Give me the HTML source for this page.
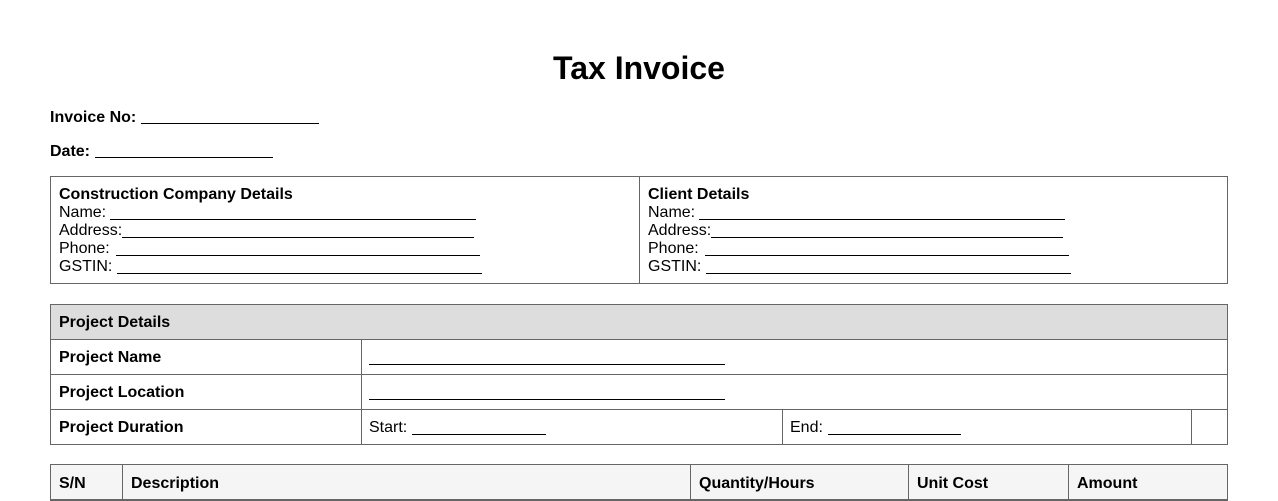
<!DOCTYPE html>
<html style="width:1278px;height:501px;overflow:hidden"><head><meta charset="utf-8"><style>
body{margin:0;width:1278px;height:501px;background:#fff;font-family:"Liberation Sans",Arial,sans-serif;font-size:16px;color:#000;position:relative;overflow:hidden}
.a{position:absolute;white-space:nowrap;line-height:18px}
.b{font-weight:bold}
.u{position:absolute;height:1px;background:#000}
.box{position:absolute;border:1px solid #666;box-sizing:border-box}
.h{position:absolute;height:1px;background:#666}
.v{position:absolute;width:1px;background:#666}
</style></head><body>
<div class="a b" style="left:0;width:1278px;text-align:center;top:49px;font-size:32px;line-height:38px">Tax Invoice</div>
<div class="a b" style="left:50px;top:109px">Invoice No:</div><div class="u" style="left:141px;width:178px;top:123px"></div>
<div class="a b" style="left:50px;top:143px">Date:</div><div class="u" style="left:95px;width:178px;top:157px"></div>

<div class="box" style="left:50px;top:176px;width:1178px;height:108px"></div>
<div class="v" style="left:639px;top:176px;height:108px"></div>
<div class="a b" style="left:59px;top:186px">Construction Company Details</div>
<div class="a" style="left:59px;top:204px">Name:</div><div class="u" style="left:110px;width:366px;top:219px"></div>
<div class="a" style="left:59px;top:222px">Address:</div><div class="u" style="left:122px;width:352px;top:237px"></div>
<div class="a" style="left:59px;top:240px">Phone:</div><div class="u" style="left:116px;width:364px;top:255px"></div>
<div class="a" style="left:59px;top:258px">GSTIN:</div><div class="u" style="left:117px;width:365px;top:273px"></div>
<div class="a b" style="left:648px;top:186px">Client Details</div>
<div class="a" style="left:648px;top:204px">Name:</div><div class="u" style="left:699px;width:366px;top:219px"></div>
<div class="a" style="left:648px;top:222px">Address:</div><div class="u" style="left:711px;width:352px;top:237px"></div>
<div class="a" style="left:648px;top:240px">Phone:</div><div class="u" style="left:705px;width:364px;top:255px"></div>
<div class="a" style="left:648px;top:258px">GSTIN:</div><div class="u" style="left:706px;width:365px;top:273px"></div>

<div class="box" style="left:50px;top:304px;width:1178px;height:141px;background:linear-gradient(#ddd 0,#ddd 35px,#fff 35px)"></div>
<div class="h" style="left:50px;width:1178px;top:339px"></div>
<div class="h" style="left:50px;width:1178px;top:374px"></div>
<div class="h" style="left:50px;width:1178px;top:409px"></div>
<div class="v" style="left:361px;top:339px;height:105px"></div>
<div class="v" style="left:782px;top:409px;height:35px"></div>
<div class="v" style="left:1191px;top:409px;height:35px"></div>
<div class="a b" style="left:59px;top:314px">Project Details</div>
<div class="a b" style="left:59px;top:349px">Project Name</div><div class="u" style="left:369px;width:356px;top:364px"></div>
<div class="a b" style="left:59px;top:384px">Project Location</div><div class="u" style="left:369px;width:356px;top:399px"></div>
<div class="a b" style="left:59px;top:419px">Project Duration</div>
<div class="a" style="left:369px;top:419px">Start:</div><div class="u" style="left:412px;width:134px;top:434px"></div>
<div class="a" style="left:790px;top:419px">End:</div><div class="u" style="left:828px;width:133px;top:434px"></div>

<div class="box" style="left:50px;top:464px;width:1178px;height:37px;background:#f5f5f5"></div>
<div class="h" style="left:50px;width:1178px;top:499px"></div>
<div class="v" style="left:122px;top:464px;height:37px"></div>
<div class="v" style="left:690px;top:464px;height:37px"></div>
<div class="v" style="left:908px;top:464px;height:37px"></div>
<div class="v" style="left:1068px;top:464px;height:37px"></div>
<div class="a b" style="left:59px;top:475px">S/N</div>
<div class="a b" style="left:131px;top:475px">Description</div>
<div class="a b" style="left:699px;top:475px">Quantity/Hours</div>
<div class="a b" style="left:917px;top:475px">Unit Cost</div>
<div class="a b" style="left:1077px;top:475px">Amount</div>
</body></html>
